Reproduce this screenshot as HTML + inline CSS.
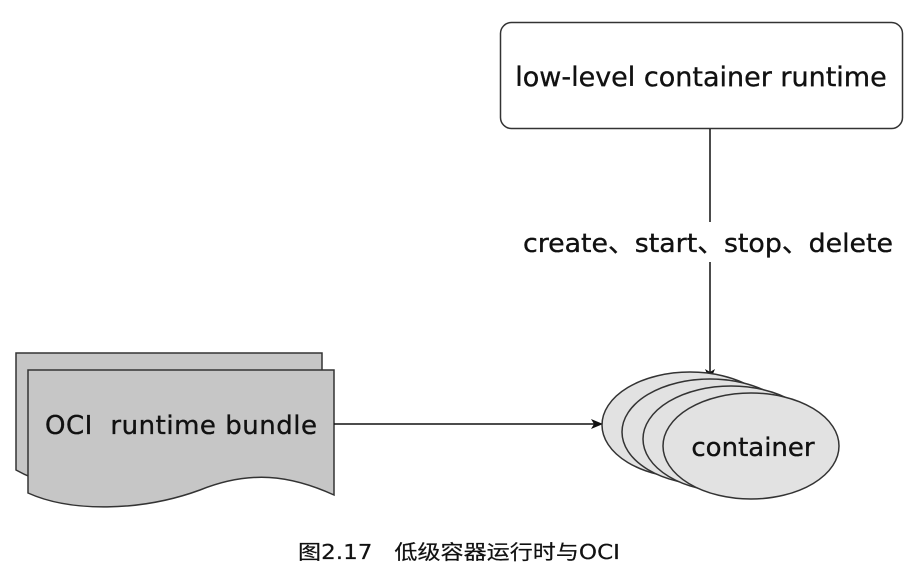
<!DOCTYPE html>
<html><head><meta charset="utf-8"><style>
body{margin:0;background:#fff;width:914px;height:577px;overflow:hidden}
text{font-family:"DejaVu Sans","Liberation Sans","Noto Sans CJK SC",sans-serif;fill:#111;stroke:#111;stroke-width:0.35;white-space:pre}
</style></head><body>
<svg width="914" height="577" viewBox="0 0 914 577">
<defs><marker id="a" markerWidth="12" markerHeight="10" refX="11" refY="5" orient="auto" markerUnits="userSpaceOnUse"><path d="M0,0 L12,5 L0,10 L3,5 Z" fill="#111"/></marker></defs>
<rect x="500.5" y="22.5" width="402" height="106" rx="11" fill="#fff" stroke="#333" stroke-width="1.5"/>
<text x="701" y="86" font-size="27" text-anchor="middle">low-level container runtime</text>
<line x1="710" y1="129" x2="710" y2="222" stroke="#111" stroke-width="1.5"/>
<line x1="710" y1="262" x2="710" y2="380" stroke="#111" stroke-width="1.5" marker-end="url(#a)"/>
<text x="708" y="252" font-size="26" text-anchor="middle" textLength="370" lengthAdjust="spacingAndGlyphs">create、start、stop、delete</text>
<path d="M16,353 H322 V470 C270,455 230,460 190,475 C130,495 60,495 16,470 Z" fill="#c6c6c6" stroke="#333" stroke-width="1.5"/>
<path d="M28,370 H334 V495 C290,475 250,470 200,490 C140,512 70,512 28,493 Z" fill="#c6c6c6" stroke="#333" stroke-width="1.5"/>
<text x="181" y="434" font-size="26" text-anchor="middle" xml:space="preserve" textLength="272" lengthAdjust="spacing">OCI  runtime bundle</text>
<line x1="334" y1="424" x2="602" y2="424" stroke="#111" stroke-width="1.5" marker-end="url(#a)"/>
<g fill="#e2e2e2" stroke="#333" stroke-width="1.5">
<ellipse cx="690" cy="425" rx="88" ry="53"/>
<ellipse cx="710" cy="432" rx="88" ry="53"/>
<ellipse cx="731" cy="439" rx="88" ry="53"/>
<ellipse cx="751" cy="446" rx="88" ry="53"/>
</g>
<text x="753" y="456" font-size="26" text-anchor="middle">container</text>
<text x="459" y="559" font-size="20" text-anchor="middle" xml:space="preserve" textLength="322" lengthAdjust="spacingAndGlyphs" style="stroke-width:0.2">图2.17   低级容器运行时与OCI</text>
</svg>
</body></html>
